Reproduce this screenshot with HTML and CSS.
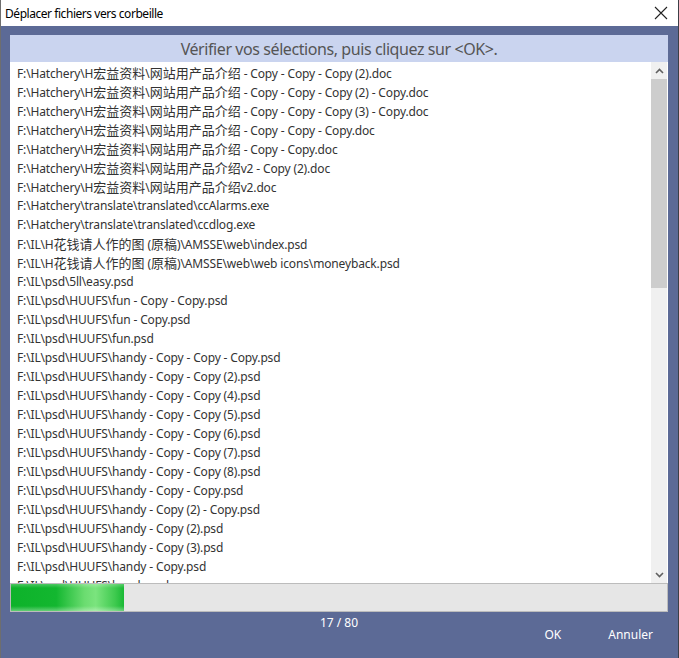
FILE: index.html
```html
<!DOCTYPE html>
<html lang="fr">
<head>
    <meta charset="UTF-8">
    <title>Déplacer fichiers vers corbeille</title>
    <link rel="stylesheet" href="styles.css">
</head>
<body>
    <div class="window">
        <div class="titlebar">
            <span class="title">Déplacer fichiers vers corbeille</span>
            <svg class="close" width="14" height="14" viewBox="0 0 14 14">
                <path d="M1 1 L13 13 M13 1 L1 13" stroke="#222" stroke-width="1.1" fill="none"/>
            </svg>
        </div>
        <div class="content">
            <div class="prompt">Vérifier vos sélections, puis cliquez sur &lt;OK&gt;.</div>
            <div class="list-box">
                <ul class="files">
                    <li>F:\Hatchery\H<span class="cjk">宏益资料</span>\<span class="cjk">网站用产品介绍</span> - Copy - Copy - Copy (2).doc</li>
                    <li>F:\Hatchery\H<span class="cjk">宏益资料</span>\<span class="cjk">网站用产品介绍</span> - Copy - Copy - Copy (2) - Copy.doc</li>
                    <li>F:\Hatchery\H<span class="cjk">宏益资料</span>\<span class="cjk">网站用产品介绍</span> - Copy - Copy - Copy (3) - Copy.doc</li>
                    <li>F:\Hatchery\H<span class="cjk">宏益资料</span>\<span class="cjk">网站用产品介绍</span> - Copy - Copy - Copy.doc</li>
                    <li>F:\Hatchery\H<span class="cjk">宏益资料</span>\<span class="cjk">网站用产品介绍</span> - Copy - Copy.doc</li>
                    <li>F:\Hatchery\H<span class="cjk">宏益资料</span>\<span class="cjk">网站用产品介绍</span>v2 - Copy (2).doc</li>
                    <li>F:\Hatchery\H<span class="cjk">宏益资料</span>\<span class="cjk">网站用产品介绍</span>v2.doc</li>
                    <li>F:\Hatchery\translate\translated\ccAlarms.exe</li>
                    <li>F:\Hatchery\translate\translated\ccdlog.exe</li>
                    <li>F:\IL\H<span class="cjk">花钱请人作的图</span> (<span class="cjk">原稿</span>)\AMSSE\web\index.psd</li>
                    <li>F:\IL\H<span class="cjk">花钱请人作的图</span> (<span class="cjk">原稿</span>)\AMSSE\web\web icons\moneyback.psd</li>
                    <li>F:\IL\psd\5ll\easy.psd</li>
                    <li>F:\IL\psd\HUUFS\fun - Copy - Copy.psd</li>
                    <li>F:\IL\psd\HUUFS\fun - Copy.psd</li>
                    <li>F:\IL\psd\HUUFS\fun.psd</li>
                    <li>F:\IL\psd\HUUFS\handy - Copy - Copy - Copy.psd</li>
                    <li>F:\IL\psd\HUUFS\handy - Copy - Copy (2).psd</li>
                    <li>F:\IL\psd\HUUFS\handy - Copy - Copy (4).psd</li>
                    <li>F:\IL\psd\HUUFS\handy - Copy - Copy (5).psd</li>
                    <li>F:\IL\psd\HUUFS\handy - Copy - Copy (6).psd</li>
                    <li>F:\IL\psd\HUUFS\handy - Copy - Copy (7).psd</li>
                    <li>F:\IL\psd\HUUFS\handy - Copy - Copy (8).psd</li>
                    <li>F:\IL\psd\HUUFS\handy - Copy - Copy.psd</li>
                    <li>F:\IL\psd\HUUFS\handy - Copy (2) - Copy.psd</li>
                    <li>F:\IL\psd\HUUFS\handy - Copy (2).psd</li>
                    <li>F:\IL\psd\HUUFS\handy - Copy (3).psd</li>
                    <li>F:\IL\psd\HUUFS\handy - Copy.psd</li>
                    <li>F:\IL\psd\HUUFS\handy.psd</li>
                </ul>
                <div class="scrollbar">
                    <div class="arrow">
                        <svg width="9" height="6" viewBox="0 0 9 6"><path d="M1 5 L4.5 1.5 L8 5" stroke="#606060" stroke-width="1.6" fill="none"/></svg>
                    </div>
                    <div class="track">
                        <div class="thumb"></div>
                    </div>
                    <div class="arrow">
                        <svg width="9" height="6" viewBox="0 0 9 6"><path d="M1 1 L4.5 4.5 L8 1" stroke="#606060" stroke-width="1.6" fill="none"/></svg>
                    </div>
                </div>
            </div>
            <div class="progress">
                <div class="progress-fill" style="width: 17.2%"></div>
            </div>
            <div class="counter">17 / 80</div>
            <div class="buttons">
                <span class="btn">OK</span>
                <span class="btn">Annuler</span>
            </div>
        </div>
    </div>
</body>
</html>
```

FILE: styles.css
```css
html, body {
    margin: 0;
    padding: 0;
    background: #3c3f46;
}
body {
    font-family: "Noto Sans", "Noto Sans CJK SC", sans-serif;
    font-size: 12px;
    width: 679px;
    height: 658px;
    overflow: hidden;
}
.window {
    width: 678px;
    height: 658px;
    border-left: 1px solid #6e6e6e;
    box-sizing: border-box;
    background: #5c6a96;
    display: flex;
    flex-direction: column;
}
.titlebar {
    height: 26px;
    background: #fff;
    display: flex;
    align-items: center;
    justify-content: space-between;
    padding: 0 10px 0 4px;
    color: #000;
}
.title {
    font-size: 12px;
    letter-spacing: -0.45px;
}
.content {
    flex: 1;
    padding: 9px 10px 0 9px;
    display: flex;
    flex-direction: column;
}
.prompt {
    height: 27px;
    box-sizing: border-box;
    padding-top: 2px;
    background: #cad4ef;
    color: #555;
    font-size: 16px;
    letter-spacing: -0.42px;
    line-height: 25px;
    text-align: center;
}
.list-box {
    height: 521px;
    background: #fff;
    display: flex;
}
.files {
    flex: 1;
    list-style: none;
    margin: 0;
    padding: 1px 0 0 7px;
    overflow: hidden;
    color: #333;
    letter-spacing: -0.15px;
}
.files li {
    height: 19px;
    line-height: 19px;
    white-space: nowrap;
}
.cjk {
    font-family: "Noto Sans CJK SC", sans-serif;
    font-size: 13px;
    letter-spacing: 0;
}
.scrollbar {
    width: 16px;
    margin-right: 1px;
    background: #f0f0f0;
    display: flex;
    flex-direction: column;
}
.arrow {
    height: 17px;
    display: flex;
    align-items: center;
    justify-content: center;
}
.track {
    flex: 1;
}
.thumb {
    height: 209px;
    background: #cdcdcd;
}
.progress {
    height: 27px;
    background: #e6e6e6;
    border: 1px solid #bcbcbc;
    display: flex;
}
.progress-fill {
    background:
        linear-gradient(to bottom, rgba(255,255,255,0.25) 0, rgba(255,255,255,0) 4px, rgba(255,255,255,0) 22px, rgba(255,255,255,0.35) 100%),
        linear-gradient(to right, #0db22a 0%, #13b730 40%, #6bdc70 65%, #7be47e 75%, #3fca4f 92%, #1ab935 100%);
}
.counter {
    color: #fff;
    text-align: center;
    margin-top: 3px;
    line-height: 16px;
}
.buttons {
    display: flex;
    justify-content: flex-end;
    gap: 47px;
    padding: 0 15px 0 0;
    margin-top: -6px;
}
.btn {
    color: #fff;
    font-size: 12px;
    line-height: 20px;
}
```
